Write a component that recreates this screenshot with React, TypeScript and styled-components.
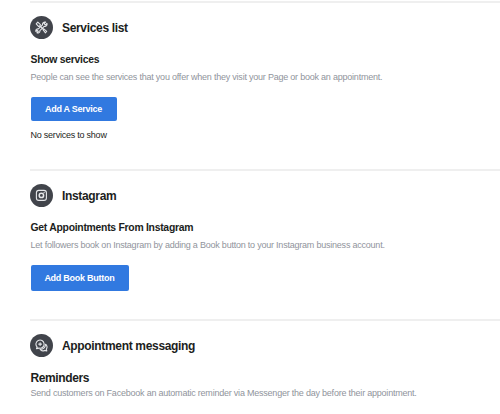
import React from "react";
import styled, { createGlobalStyle } from "styled-components";

const GlobalStyle = createGlobalStyle`
  body {
    margin: 0;
    background: #fff;
    font-family: "Liberation Sans", Arial, sans-serif;
    color: #1c1e21;
  }
`;

const Page = styled.main`
  box-sizing: border-box;
  width: 500px;
  height: 414px;
  padding: 1px 0 0 30px;
  overflow: hidden;
`;

const Section = styled.section<{ $height: number }>`
  box-sizing: border-box;
  height: ${(p) => p.$height}px;
  border-top: 2px solid #efefef;
  display: flex;
  flex-direction: column;
  align-items: flex-start;
  white-space: nowrap;
`;

const Header = styled.header`
  display: flex;
  align-items: center;
  gap: 9px;
  height: 23px;
  margin-top: 13px;
`;

const Badge = styled.span`
  display: flex;
  align-items: center;
  justify-content: center;
  width: 23px;
  height: 23px;
  border-radius: 50%;
  background: #41444b;
`;

const Title = styled.h2`
  margin: 0;
  font-size: 12px;
  letter-spacing: -0.33px;
  line-height: 16px;
  font-weight: 700;
`;

const Subtitle = styled.h3<{ $large?: boolean; $top: number }>`
  margin: ${(p) => p.$top}px 0 0 0.5px;
  font-size: ${(p) => (p.$large ? 12 : 10.4)}px;
  letter-spacing: ${(p) => (p.$large ? -0.38 : -0.27)}px;
  line-height: 14px;
  font-weight: 700;
`;

const Description = styled.p<{ $top: number; $tracking: number }>`
  margin: ${(p) => p.$top}px 0 0 0.5px;
  font-size: 9px;
  letter-spacing: ${(p) => p.$tracking}px;
  line-height: 12px;
  color: #90949c;
`;

const Button = styled.button<{ $width: number; $height: number; $top: number }>`
  margin: ${(p) => p.$top}px 0 0 0.5px;
  width: ${(p) => p.$width}px;
  height: ${(p) => p.$height}px;
  padding: 0;
  border: 0;
  border-radius: 2px;
  background: #3179e0;
  color: #fff;
  font: 700 9px/12px "Liberation Sans", Arial, sans-serif;
  letter-spacing: -0.25px;
`;

const Note = styled.p`
  margin: 8px 0 0 0.5px;
  font-size: 9px;
  letter-spacing: -0.23px;
  line-height: 12px;
`;

const Glyph = styled.svg`
  display: block;
  fill: none;
  stroke: #e6e7ea;
  stroke-width: 1.1;
  stroke-linecap: round;
  stroke-linejoin: round;
`;

const ToolsIcon = () => (
  <Glyph width="13" height="13" viewBox="0 0 13 13">
    <path d="M1.2 2.9 2.8 1.2 5.4 3.7 4.9 5.2 3.5 5.4Z" />
    <path d="m5 5 3.2 3.2M8 8.6l.8-.8 2.9 2.5-1.4 1.5Z" />
    <path d="M10.6 1.1 9 2.6l1.4 1.3 1.5-1.5c.6 1.7-.8 3.5-2.7 3L4.9 9.6c.2 1.8-1.6 2.9-3 2.2l1.4-1.4-1.1-1.1-1.3 1.2c-.4-1.6.9-2.9 2.5-2.6l4.1-4C7.2 2.1 8.8.6 10.6 1.1Z" />
  </Glyph>
);

const InstagramIcon = () => (
  <Glyph width="13" height="13" viewBox="0 0 13 13">
    <rect x="1.4" y="1.4" width="10" height="10" rx="2.4" />
    <circle cx="6.4" cy="6.4" r="2.2" strokeWidth="1.5" />
    <circle cx="9.2" cy="3.5" r=".2" />
  </Glyph>
);

const ChatIcon = () => (
  <Glyph width="13" height="13" viewBox="0 0 13 13">
    <path d="M2.2 8.1A4.1 4.1 0 1 1 4 9.1L1.5 9.6Z" />
    <path d="M5.1 3.7v2.8M3.7 5.1h2.8" />
    <path d="M10.6 5.3c1.6 1.2 1.9 3.3.7 4.8l.5 1.9-2.1-.6c-1.7.8-3.7.3-4.6-1.1 3 .2 5.3-1.9 5.5-5Z" />
  </Glyph>
);

export default function App() {
  return (
    <>
      <GlobalStyle />
      <Page>
        <Section $height={168}>
          <Header>
            <Badge><ToolsIcon /></Badge>
            <Title>Services list</Title>
          </Header>
          <Subtitle $top={14}>Show services</Subtitle>
          <Description $top={4} $tracking={-0.22}>
            People can see the services that you offer when they visit your Page or book an appointment.
          </Description>
          <Button $top={14} $width={86} $height={24}>Add A Service</Button>
          <Note>No services to show</Note>
        </Section>
        <Section $height={150}>
          <Header>
            <Badge><InstagramIcon /></Badge>
            <Title>Instagram</Title>
          </Header>
          <Subtitle $top={14}>Get Appointments From Instagram</Subtitle>
          <Description $top={4} $tracking={-0.22}>
            Let followers book on Instagram by adding a Book button to your Instagram business account.
          </Description>
          <Button $top={14} $width={98} $height={26}>Add Book Button</Button>
        </Section>
        <Section $height={94}>
          <Header>
            <Badge><ChatIcon /></Badge>
            <Title>Appointment messaging</Title>
          </Header>
          <Subtitle $large $top={14}>Reminders</Subtitle>
          <Description $top={2} $tracking={-0.22}>
            Send customers on Facebook an automatic reminder via Messenger the day before their appointment.
          </Description>
        </Section>
      </Page>
    </>
  );
}
